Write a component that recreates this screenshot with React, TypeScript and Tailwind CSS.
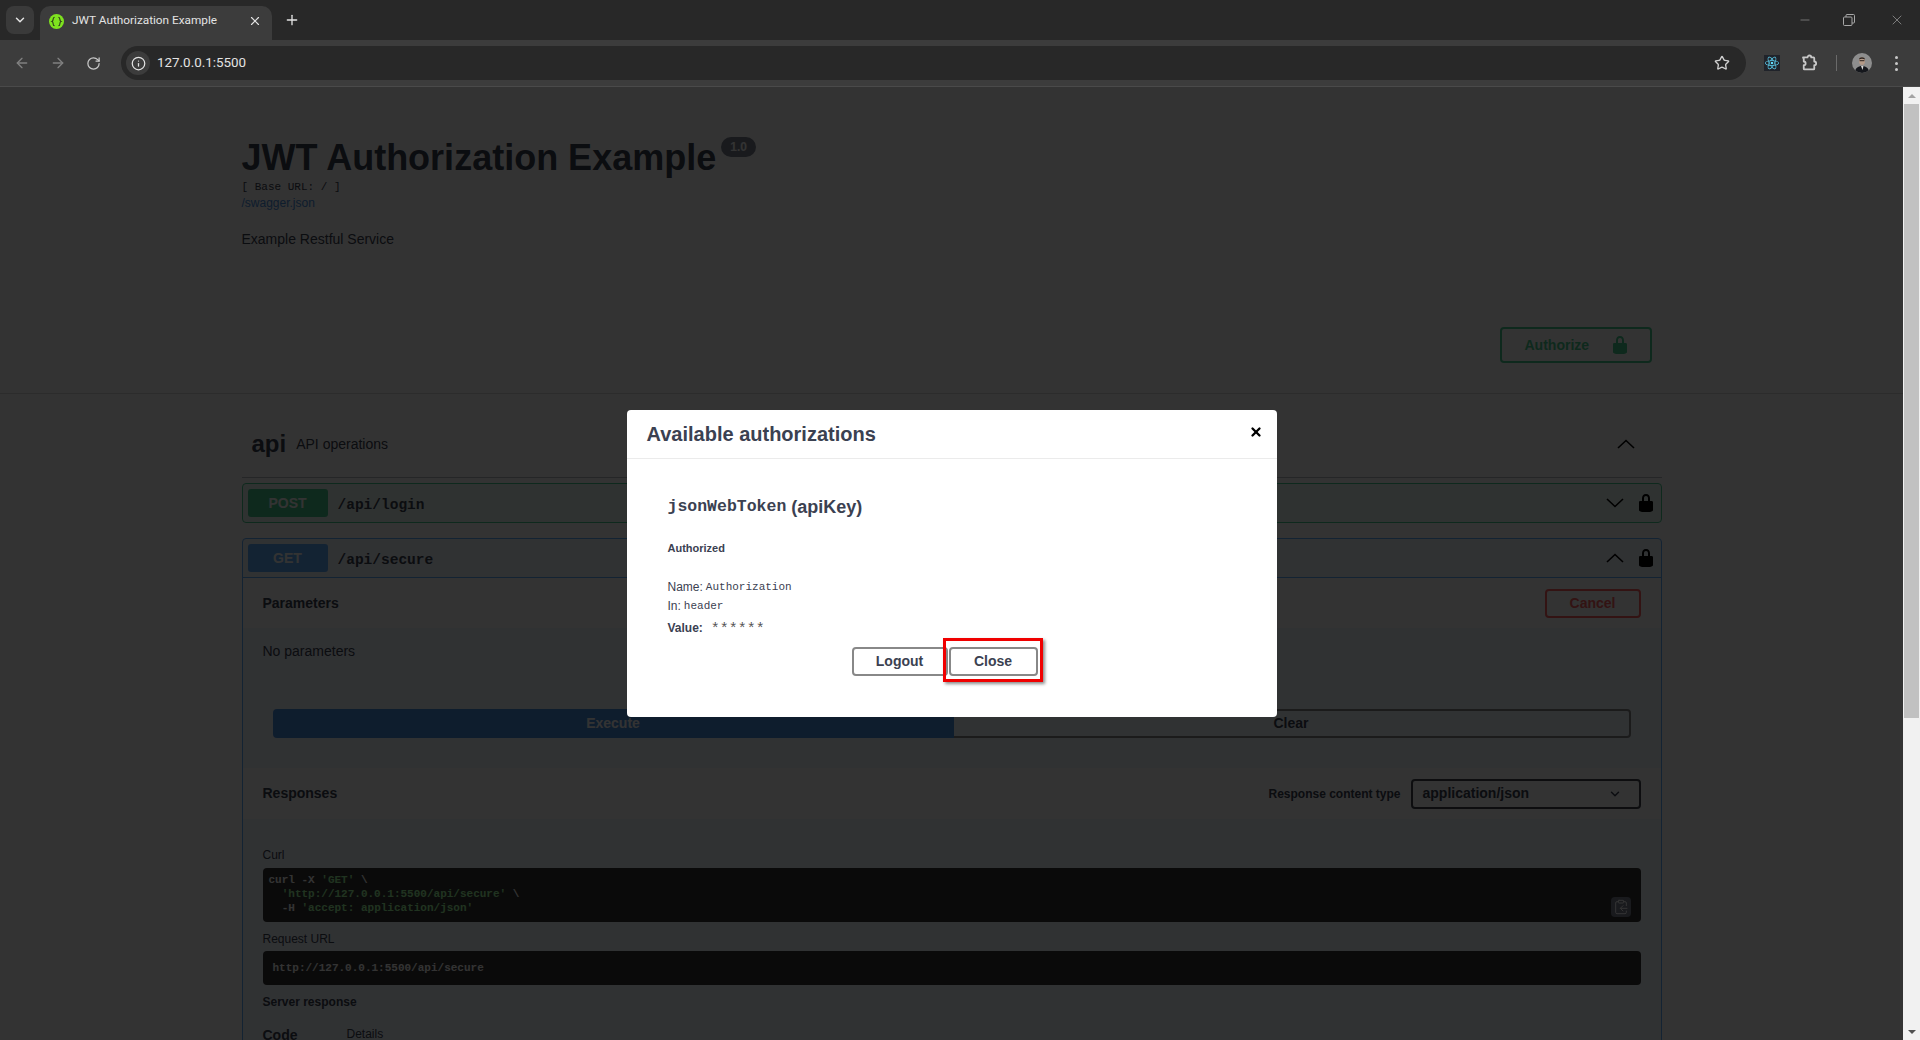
import { ArrowLeft, ArrowRight, ChevronDown, ClipboardCopy, Info, Minus, Plus, RotateCw, Star, X } from 'lucide-react';
import { SiReact } from 'react-icons/si';

const sans = "font-['Liberation_Sans',Arial,sans-serif]";
const mono = "font-['Liberation_Mono',monospace]";

const LockIcon = ({ className }: { className: string }) => (
  <svg viewBox="0 0 20 20" className={className} fill="currentColor">
    <path d="M15.8 8H14V5.6C14 2.703 12.665 1 10 1 7.334 1 6 2.703 6 5.6V8H4c-.553 0-1 .646-1 1.199V17c0 .549.428 1.139.951 1.307l1.197.387C5.672 18.861 6.55 19 7.1 19h5.8c.549 0 1.428-.139 1.951-.307l1.196-.387c.524-.167.953-.757.953-1.306V9.199C17 8.646 16.352 8 15.8 8zM12 8H8V5.199C8 3.754 8.797 3 10 3c1.203 0 2 .754 2 2.199V8z" />
  </svg>
);

const Arrow = ({ up }: { up?: boolean }) => (
  <svg viewBox="0 0 18 10" className="w-[18px] h-[10px] text-black" fill="none" stroke="currentColor" strokeWidth="1.6">
    <polyline points={up ? '1,9 9,1.5 17,9' : '1,1 9,8.5 17,1'} />
  </svg>
);

const Favicon = () => (
  <svg viewBox="0 0 16 16" className="w-[15px] h-[15px] shrink-0">
    <circle cx="8" cy="8" r="8" fill="#7ee21f" />
    <path d="M6 3.5c-1.6 0-1.6 1-1.6 2.2 0 1.2-.4 2-1.2 2.3.8.3 1.2 1.1 1.2 2.3 0 1.2 0 2.2 1.6 2.2M10 3.5c1.6 0 1.6 1 1.6 2.2 0 1.2.4 2 1.2 2.3-.8.3-1.2 1.1-1.2 2.3 0 1.2 0 2.2-1.6 2.2" fill="none" stroke="#2b3a1a" strokeWidth="1.2" />
  </svg>
);

const ExtensionIcon = () => (
  <svg viewBox="0 0 24 24" className="ml-[20px] w-[18px] h-[18px] text-[#c8c8c8]" fill="none" stroke="currentColor" strokeWidth="2.4" strokeLinejoin="round">
    <path d="M4 4.5h6a2.5 2.5 0 0 1 5 0h3a1 1 0 0 1 1 1V10a2.5 2.5 0 0 1 0 5v4.5a1 1 0 0 1-1 1H6a1 1 0 0 1-1-1V15a2.5 2.5 0 0 0 0-5V5.5a1 1 0 0 1-1-1z" />
  </svg>
);

const Avatar = () => (
  <svg viewBox="0 0 20 20" className="w-5 h-5 rounded-full">
    <rect width="20" height="20" fill="#8e8e8e" />
    <path d="M3 20c0-5 3-7 7-7s7 2 7 7z" fill="#15171c" />
    <path d="M9 13h2.5l-1 4z" fill="#d8d8d8" />
    <ellipse cx="10" cy="8" rx="3" ry="4" fill="#b59a88" />
    <path d="M7 6.5C7 3.5 13 3.5 13 6.5 11 5.5 9 5.5 7 6.5z" fill="#2a2320" />
    <rect x="7.6" y="7.2" width="4.8" height="1" fill="#2a2320" />
  </svg>
);

const BrowserChrome = () => (
  <div className="shrink-0 font-['Roboto',sans-serif]">
    <div className="h-10 bg-[#282828] flex items-end relative">
      <div className="absolute left-[6px] top-[6px] w-7 h-7 rounded-lg bg-[#3a3a3a] flex items-center justify-center text-[#e3e3e3]">
        <ChevronDown size={14} strokeWidth={2.5} />
      </div>
      <div className="ml-10 w-[232px] h-[34px] bg-[#3c3c3c] rounded-t-[10px] flex items-center pl-[9px] pr-[10px] pb-1 text-[11.8px] text-[#e3e3e3]">
        <Favicon />
        <span className="ml-[8px] flex-1 whitespace-nowrap">JWT Authorization Example</span>
        <X size={14} strokeWidth={2} />
      </div>
      <div className="ml-[12px] mb-[12px] text-[#e3e3e3]">
        <Plus size={16} strokeWidth={2} />
      </div>
      <div className="ml-auto flex items-center h-10 text-[#a8a8a8]">
        <Minus size={14} strokeWidth={1} className="mr-[31px]" />
        <svg viewBox="0 0 12 12" className="w-3 h-3 mr-[34px]" fill="none" stroke="currentColor" strokeWidth="1">
          <rect x="0.5" y="3" width="8.5" height="8.5" rx="1" />
          <path d="M3 3V1.5a1 1 0 0 1 1-1h6.5a1 1 0 0 1 1 1V8a1 1 0 0 1-1 1H9" />
        </svg>
        <X size={16} strokeWidth={1} className="mr-[15px]" />
      </div>
    </div>
    <div className="h-[47px] bg-[#3c3c3c] border-b border-[#4a4a4a] flex items-center text-[#a0a0a0]">
      <ArrowLeft size={16} strokeWidth={2} className="ml-[14px] text-[#808080]" />
      <ArrowRight size={16} strokeWidth={2} className="ml-[20px] text-[#808080]" />
      <RotateCw size={15} strokeWidth={2} className="ml-[20px] text-[#c8c8c8]" />
      <div className="ml-[20px] w-[1625px] h-[34px] rounded-full bg-[#282828] flex items-center pl-[5px]">
        <div className="w-6 h-6 rounded-full bg-[#3c3c3c] flex items-center justify-center text-[#e3e3e3]">
          <Info size={15} strokeWidth={2} />
        </div>
        <span className="ml-[7px] text-[13.4px] text-[#e3e3e3]">127.0.0.1:5500</span>
        <Star size={16} strokeWidth={2} className="ml-auto mr-[16px] text-[#d0d0d0]" />
      </div>
      <div className="ml-[18px] w-4 h-4 bg-[#20232a] flex items-center justify-center text-[#61dafb]">
        <SiReact size={14} />
      </div>
      <ExtensionIcon />
      <div className="ml-[18px] w-px h-4 bg-[#6a6a6a]" />
      <div className="ml-[15px]">
        <Avatar />
      </div>
      <div className="ml-[23px] flex flex-col gap-[3px]">
        <div className="w-[3px] h-[3px] rounded-full bg-[#c8c8c8]" />
        <div className="w-[3px] h-[3px] rounded-full bg-[#c8c8c8]" />
        <div className="w-[3px] h-[3px] rounded-full bg-[#c8c8c8]" />
      </div>
    </div>
  </div>
);

const Scrollbar = () => (
  <div className="w-[17px] shrink-0 bg-[#f1f1f1] flex flex-col items-center">
    <div className="h-[17px] flex items-center justify-center">
      <div className="w-0 h-0 border-x-[4px] border-x-transparent border-b-[4px] border-b-[#a3a3a3]" />
    </div>
    <div className="w-[15px] h-[614px] bg-[#c1c1c1]" />
    <div className="mt-auto h-[17px] flex items-center justify-center">
      <div className="w-0 h-0 border-x-[4px] border-x-transparent border-t-[4px] border-t-[#505050]" />
    </div>
  </div>
);

const SwaggerPage = () => (
  <div className={`${sans} text-[#3b4151]`}>
    <div className="h-[307px] border-b border-[#d9d9d9]">
      <div className="w-[1420px] mx-auto pt-[50px] flex flex-col">
        <div className="h-10 flex items-start">
          <h1 className="mt-px text-[36px] leading-10 font-bold">JWT Authorization Example</h1>
          <span className="ml-[5px] w-[35px] h-5 rounded-full bg-[#7d8492] text-white text-[12px] font-bold flex items-center justify-center">1.0</span>
        </div>
        <div className={`${mono} h-[18px] text-[11px] leading-[20px]`}>[ Base URL: / ]</div>
        <a className="h-4 text-[12px] leading-4 text-[#4990e2]">/swagger.json</a>
        <p className="mt-[18px] h-5 text-[14px] leading-5">Example Restful Service</p>
        <button className="mt-[78px] mr-[10px] self-end w-[152px] h-9 border-2 border-[#49cc90] rounded text-[#49cc90] text-[14px] font-bold flex items-center pl-[23px]">
          Authorize
          <LockIcon className="ml-[21px] w-5 h-5" />
        </button>
      </div>
    </div>
    <div className="w-[1420px] mx-auto">
      <div className="pt-[33px] pb-4 border-b border-[#b9bcc2] flex items-center">
        <div className="h-[34px] flex items-center pl-[10px] flex-1">
          <h3 className="text-[24px] font-bold">api</h3>
          <span className="ml-[10px] text-[14px]">API operations</span>
        </div>
        <div className="mr-[27px]">
          <Arrow up />
        </div>
      </div>

      <div className="mt-[5px] h-10 border border-[#49cc90] rounded bg-[#49cc90]/10 flex items-center pl-[5px] pr-[5px]">
        <span className="w-20 h-7 rounded-[3px] bg-[#49cc90] text-white text-[14px] font-bold flex items-center justify-center">POST</span>
        <span className={`${mono} ml-[10px] mt-[6px] text-[14.5px] font-bold flex-1`}>/api/login</span>
        <Arrow />
        <LockIcon className="ml-[12px] w-5 h-5 text-black" />
      </div>

      <div className="mt-[15px] border border-[#61affe] rounded-t bg-[#61affe]/10">
        <div className="h-[39px] border-b border-[#61affe] flex items-center pl-[5px] pr-[5px]">
          <span className="w-20 h-7 rounded-[3px] bg-[#61affe] text-white text-[14px] font-bold flex items-center justify-center">GET</span>
          <span className={`${mono} ml-[10px] mt-[6px] text-[14.5px] font-bold flex-1`}>/api/secure</span>
          <Arrow up />
          <LockIcon className="ml-[12px] w-5 h-5 text-black" />
        </div>

        <div className="h-[50px] bg-white/80 px-5 flex items-center justify-between">
          <h4 className="text-[14px] font-bold">Parameters</h4>
          <button className="w-24 h-[29px] border-2 border-[#ff6060] rounded text-[#ff6060] text-[14px] font-bold">Cancel</button>
        </div>
        <div className="mt-[13px] h-5 px-5 text-[14px] leading-5">No parameters</div>

        <div className="mt-12 mx-[30px] h-[29px] flex">
          <button className="w-[681px] shrink-0 bg-[#4990e2] rounded-l text-white text-[14px] font-bold">Execute</button>
          <button className="flex-1 border-2 border-[#888] border-l-0 rounded-r text-[14px] font-bold">Clear</button>
        </div>

        <div className="mt-[30px] h-[51px] bg-white/80 px-5 flex items-center">
          <h4 className="text-[14px] font-bold flex-1">Responses</h4>
          <span className="text-[12px] font-bold">Response content type</span>
          <div className="ml-[10px] w-[230px] h-[30px] border-2 border-[#41444e] rounded flex items-center justify-between pl-[10px] pr-[17px] text-[14px] font-bold">
            application/json
            <ChevronDown size={14} strokeWidth={2.5} />
          </div>
        </div>

        <div className="px-5">
          <div className="mt-7 h-4 text-[12px] leading-4">Curl</div>
          <div className={`${mono} relative mt-[5px] h-[54px] bg-[#333] rounded pl-[6px] pt-[5px] text-[11px] leading-[14px] font-bold text-white whitespace-pre`}>
            <div>curl -X <span className="text-[#a2fca2]">'GET'</span> \</div>
            <div>  <span className="text-[#a2fca2]">'http://127.0.0.1:5500/api/secure'</span> \</div>
            <div>  -H <span className="text-[#a2fca2]">'accept: application/json'</span></div>
            <div className="absolute right-[10px] bottom-[5px] w-5 h-5 rounded bg-[#7d8293] flex items-center justify-center text-white">
              <ClipboardCopy size={16} strokeWidth={1.5} />
            </div>
          </div>
          <div className="mt-[9px] h-4 text-[12px] leading-4">Request URL</div>
          <div className={`${mono} mt-1 h-[34px] bg-[#333] rounded pl-[10px] flex items-center text-[11px] font-bold text-white`}>http://127.0.0.1:5500/api/secure</div>
          <div className="mt-[9px] h-4 text-[12px] leading-4 font-bold">Server response</div>
          <div className="mt-[15px] flex items-center">
            <span className="w-[84px] text-[14px] font-bold">Code</span>
            <span className="text-[12px] -mt-1">Details</span>
          </div>
        </div>
      </div>
    </div>
  </div>
);

const AuthModal = () => (
  <div className={`${sans} w-[650px] h-[307px] bg-white rounded-[4px] text-[#3b4151]`}>
    <div className="h-[49px] border-b border-[#ebebeb] flex items-center justify-between pl-[20px] pr-[14px]">
      <h3 className="text-[20px] font-bold">Available authorizations</h3>
      <X size={14} strokeWidth={4} className="text-black -mt-1" />
    </div>
    <div className="pl-[41px] pt-[36px]">
      <div className="h-[24px] flex items-center font-bold">
        <code className={`${mono} text-[16.5px]`}>jsonWebToken</code>
        <span className="ml-[5px] text-[18px]">(apiKey)</span>
      </div>
      <h6 className="mt-[22px] h-[14px] text-[11px] leading-[14px] font-bold">Authorized</h6>
      <div className="mt-[24px] h-4 text-[12px] leading-4 flex items-center">
        Name:<code className={`${mono} ml-[3px] text-[11px]`}>Authorization</code>
      </div>
      <div className="mt-[3px] h-4 text-[12px] leading-4 flex items-center">
        In:<code className={`${mono} ml-[3px] text-[11px]`}>header</code>
      </div>
      <div className="mt-[6px] h-4 text-[12px] leading-4 font-bold flex items-center">
        Value:<span className={`${mono} ml-[8px] mt-1 text-[15px] font-normal text-[#555]`}>******</span>
      </div>
      <div className="mt-[11px] ml-[184px] flex gap-px">
        <button className="w-[96px] h-[29px] border-2 border-[#888] rounded-[4px] text-[14px] font-bold text-[#3b4151]">Logout</button>
        <div className="relative">
          <button className="w-[89px] h-[29px] border-2 border-[#888] rounded-[4px] text-[14px] font-bold text-[#3b4151] block">Close</button>
          <div className="absolute -left-[6px] -top-[9px] w-[100px] h-[44px] border-[3px] border-[#f00000] shadow-[2px_2px_3px_rgba(0,0,0,0.45)]" />
        </div>
      </div>
    </div>
  </div>
);

export default function App() {
  return (
    <div className="w-full h-screen overflow-hidden flex flex-col bg-[#282828]">
      <BrowserChrome />
      <div className="flex-1 min-h-0 flex">
        <main className="relative flex-1 min-w-0 overflow-hidden bg-white">
          <SwaggerPage />
          <div className="absolute inset-0 bg-black/80 flex justify-center pt-[323px]">
            <AuthModal />
          </div>
        </main>
        <Scrollbar />
      </div>
    </div>
  );
}
